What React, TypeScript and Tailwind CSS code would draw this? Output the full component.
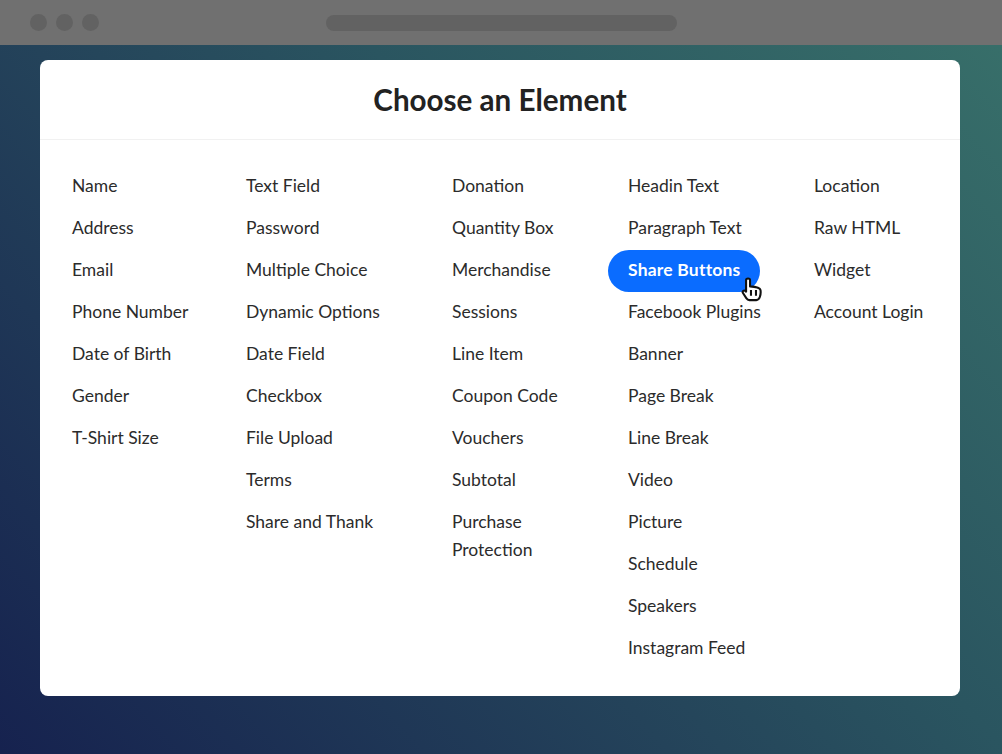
import { Fragment } from "react";

const columns = [
  ["Name", "Address", "Email", "Phone Number", "Date of Birth", "Gender", "T-Shirt Size"],
  ["Text Field", "Password", "Multiple Choice", "Dynamic Options", "Date Field", "Checkbox", "File Upload", "Terms", "Share and Thank"],
  ["Donation", "Quantity Box", "Merchandise", "Sessions", "Line Item", "Coupon Code", "Vouchers", "Subtotal", "Purchase Protection"],
  ["Headin Text", "Paragraph Text", "Share Buttons", "Facebook Plugins", "Banner", "Page Break", "Line Break", "Video", "Picture", "Schedule", "Speakers", "Instagram Feed"],
  ["Location", "Raw HTML", "Widget", "Account Login"],
];

function HandCursor() {
  return (
    <svg viewBox="0 0 20 24" className="absolute left-[133px] top-[27px] h-[25px] w-[21px]">
      <path
        d="M4.800 3c0-2 3.800-2 3.800 0v6c3 .2 9.400.6 10 3.400.4 2.200.2 4.600-.6 6.800-.6 1.700-1.600 3-3.400 3H8c-1.300 0-2.200-.7-3-1.900L1.800 15.300c-1-1.500.8-3 2.200-1.900l.8.7V3z"
        fill="#fff"
        stroke="#111"
        strokeWidth="2"
        strokeLinejoin="round"
      />
      <path d="M9.500 12.500v5.500M14.300 12.500v5.500" stroke="#111" strokeWidth="2" />
    </svg>
  );
}

export default function App() {
  return (
    <div className="flex h-[754px] w-[1002px] flex-col overflow-hidden bg-[linear-gradient(48deg,#16224f_0%,#24435a_40%,#2a5560_60%,#38706a_100%)] font-['Lato','Noto_Sans',sans-serif]">
      <div className="flex h-[45px] items-center bg-[#707070] pl-[30px]">
        <div className="flex gap-[9px]">
          <div className="h-[17px] w-[17px] rounded-full bg-[#626262]" />
          <div className="h-[17px] w-[17px] rounded-full bg-[#626262]" />
          <div className="h-[17px] w-[17px] rounded-full bg-[#626262]" />
        </div>
        <div className="ml-[227px] h-[16px] w-[351px] rounded-full bg-[#626262]" />
      </div>

      <div className="mx-[40px] mt-[15px] h-[636px] w-[920px] rounded-lg bg-white">
        <h1 className="flex h-[80px] items-center justify-center border-b border-[#f1f1f1] pt-[2px] text-[29.600px] font-bold text-[#222]">
          Choose an Element
        </h1>
        <div className="grid grid-cols-[174px_206px_176px_186px_auto] pl-[32px] pt-[26px]">
          {columns.map((items, i) => (
            <ul key={i} className={i === 2 ? "w-[125px]" : ""}>
              {items.map((item) => (
                <Fragment key={item}>
                  {item === "Share Buttons" ? (
                    <li className="relative -ml-5 w-fit rounded-full bg-[#0a6cff] pt-[6px] pr-[19px] pb-[8px] pl-5 text-[17.500px] leading-[28px] font-bold tracking-[0.2px] text-white">
                      {item}
                      <HandCursor />
                    </li>
                  ) : (
                    <li className="pt-[6px] pb-[8px] text-[17.500px] leading-[28px] text-[#2b2b2b]">{item}</li>
                  )}
                </Fragment>
              ))}
            </ul>
          ))}
        </div>
      </div>
    </div>
  );
}
